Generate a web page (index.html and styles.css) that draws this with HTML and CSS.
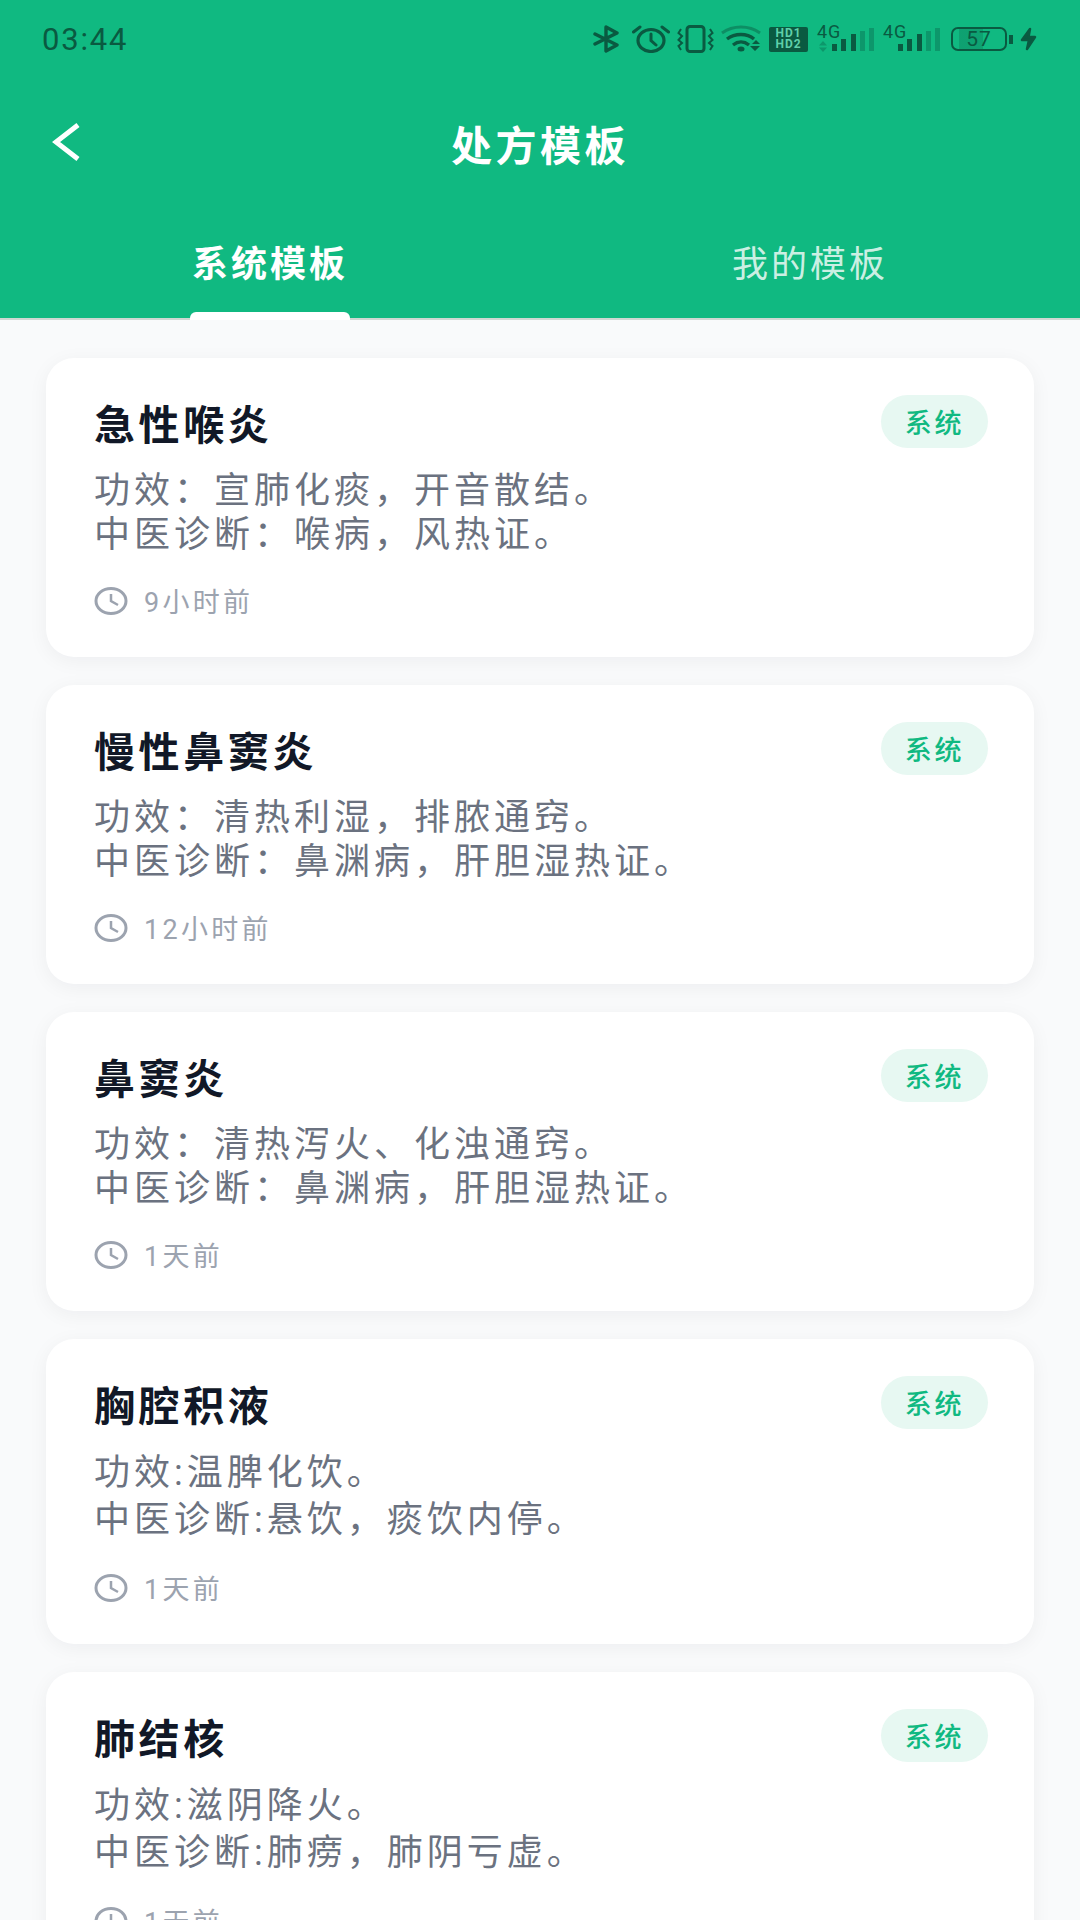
FILE: index.html
```html
<!DOCTYPE html>
<html lang="zh-CN">
<head>
    <meta charset="utf-8">
    <meta name="viewport" content="width=device-width, initial-scale=1">
    <title>处方模板</title>
    <link rel="stylesheet" href="styles.css">
</head>
<body>
    <header class="header">
        <div class="status-bar">
            <span class="status-time">03:44</span>
            <div class="status-icons">
                <svg class="icon-bt" viewBox="0 0 27 28"><path d="M2 9 L24 20 L13 26 V2 L24 8 L2 19" fill="none" stroke="#0a5a41" stroke-width="3.4" stroke-linecap="round" stroke-linejoin="round"/></svg>
                <svg class="icon-alarm" viewBox="0 0 38 28"><ellipse cx="19" cy="15.500" rx="13" ry="11" fill="none" stroke="#0a5a41" stroke-width="3.2"/><path d="M19 9 V15.500 L24 20 M1.500 7 L8 2 M36.500 7 L30 2" fill="none" stroke="#0a5a41" stroke-width="3" stroke-linecap="round"/></svg>
                <svg class="icon-vibrate" viewBox="0 0 37 28"><rect x="10" y="1.500" width="17" height="25" rx="3" fill="none" stroke="#0a5a41" stroke-width="3"/><path d="M4 4 L1.500 8 L5 11 L1.500 15 L5 18 L1.500 21 L4 25 M33 4 L35.500 8 L32 11 L35.500 15 L32 18 L35.500 21 L33 25" fill="none" stroke="#0a5a41" stroke-width="2"/></svg>
                <svg class="icon-wifi" viewBox="0 0 40 28"><path d="M1 8 C12 0 28 0 39 8" fill="none" stroke="#0a5a41" stroke-opacity=".45" stroke-width="3"/><path d="M6 14 C14 8 26 8 33 14 M12 20 C17 16 23 16 28 20" fill="none" stroke="#0a5a41" stroke-width="3.4"/><ellipse cx="20" cy="24" rx="3.500" ry="2.500" fill="#0a5a41"/><path d="M31 19 L35 15 L39 19 Z M29 21 L39 21 L34 26 Z" fill="#0a5a41"/></svg>
                <div class="sim-badge"><span>HD1</span><span>HD2</span></div>
                <div class="signal">
                    <span class="signal-label">4G</span>
                    <svg class="signal-arrows" viewBox="0 0 8 11"><path d="M0 4.500 L4 0 L8 4.500 Z M0 6.500 H8 L4 11 Z" fill="#0a5a41" fill-opacity=".35"/></svg>
                    <svg class="signal-bars" viewBox="0 0 42 23"><rect x="0" y="16" width="5" height="7" fill="#0a5a41"/><rect x="9" y="11" width="5" height="12" fill="#0a5a41"/><rect x="19" y="6" width="5" height="17" fill="#0a5a41"/><rect x="28" y="3" width="5" height="20" fill="#0a5a41" fill-opacity=".35"/><rect x="37" y="0" width="5" height="23" fill="#0a5a41" fill-opacity=".35"/></svg>
                </div>
                <div class="signal">
                    <span class="signal-label">4G</span>
                    <svg class="signal-bars" viewBox="0 0 42 23"><rect x="0" y="16" width="5" height="7" fill="#0a5a41"/><rect x="9" y="11" width="5" height="12" fill="#0a5a41"/><rect x="19" y="6" width="5" height="17" fill="#0a5a41"/><rect x="28" y="3" width="5" height="20" fill="#0a5a41" fill-opacity=".35"/><rect x="37" y="0" width="5" height="23" fill="#0a5a41" fill-opacity=".35"/></svg>
                </div>
                <div class="battery">
                    <div class="battery-body"><span>57</span></div>
                    <span class="battery-tip"></span>
                </div>
                <svg class="icon-bolt" viewBox="0 0 17 24"><path d="M10 2 L2 13 H9 L7 22 L15 10 H8.500 Z" fill="#0a5a41" stroke="#0a5a41" stroke-width="2.500" stroke-linejoin="round"/></svg>
            </div>
        </div>

        <div class="nav-bar">
            <svg class="back-icon" viewBox="0 0 30 40"><path d="M26 3 L4 20 L26 37" fill="none" stroke="#fff" stroke-width="5"/></svg>
            <h1 class="page-title">处方模板</h1>
        </div>

        <div class="tabs">
            <div class="tab tab-active">系统模板</div>
            <div class="tab">我的模板</div>
        </div>
    </header>

    <main class="list">
        <section class="card">
            <div class="card-head">
                <h2 class="card-title">急性喉炎</h2>
                <span class="tag">系统</span>
            </div>
            <p class="card-text">功效：宣肺化痰，开音散结。<br>中医诊断：喉病，风热证。</p>
            <div class="card-meta">
                <svg class="clock" viewBox="0 0 34 28"><ellipse cx="17" cy="14" rx="15" ry="12.500" fill="none" stroke="#9ca3af" stroke-width="3"/><path d="M17 7 V14 L24 18" fill="none" stroke="#9ca3af" stroke-width="2.500"/></svg>
                <span>9小时前</span>
            </div>
        </section>

        <section class="card">
            <div class="card-head">
                <h2 class="card-title">慢性鼻窦炎</h2>
                <span class="tag">系统</span>
            </div>
            <p class="card-text">功效：清热利湿，排脓通窍。<br>中医诊断：鼻渊病，肝胆湿热证。</p>
            <div class="card-meta">
                <svg class="clock" viewBox="0 0 34 28"><ellipse cx="17" cy="14" rx="15" ry="12.500" fill="none" stroke="#9ca3af" stroke-width="3"/><path d="M17 7 V14 L24 18" fill="none" stroke="#9ca3af" stroke-width="2.500"/></svg>
                <span>12小时前</span>
            </div>
        </section>

        <section class="card">
            <div class="card-head">
                <h2 class="card-title">鼻窦炎</h2>
                <span class="tag">系统</span>
            </div>
            <p class="card-text">功效：清热泻火、化浊通窍。<br>中医诊断：鼻渊病，肝胆湿热证。</p>
            <div class="card-meta">
                <svg class="clock" viewBox="0 0 34 28"><ellipse cx="17" cy="14" rx="15" ry="12.500" fill="none" stroke="#9ca3af" stroke-width="3"/><path d="M17 7 V14 L24 18" fill="none" stroke="#9ca3af" stroke-width="2.500"/></svg>
                <span>1天前</span>
            </div>
        </section>

        <section class="card card-mixed">
            <div class="card-head">
                <h2 class="card-title">胸腔积液</h2>
                <span class="tag">系统</span>
            </div>
            <p class="card-text">功效:温脾化饮。<br>中医诊断:悬饮，痰饮内停。</p>
            <div class="card-meta">
                <svg class="clock" viewBox="0 0 34 28"><ellipse cx="17" cy="14" rx="15" ry="12.500" fill="none" stroke="#9ca3af" stroke-width="3"/><path d="M17 7 V14 L24 18" fill="none" stroke="#9ca3af" stroke-width="2.500"/></svg>
                <span>1天前</span>
            </div>
        </section>

        <section class="card card-mixed">
            <div class="card-head">
                <h2 class="card-title">肺结核</h2>
                <span class="tag">系统</span>
            </div>
            <p class="card-text">功效:滋阴降火。<br>中医诊断:肺痨，肺阴亏虚。</p>
            <div class="card-meta">
                <svg class="clock" viewBox="0 0 34 28"><ellipse cx="17" cy="14" rx="15" ry="12.500" fill="none" stroke="#9ca3af" stroke-width="3"/><path d="M17 7 V14 L24 18" fill="none" stroke="#9ca3af" stroke-width="2.500"/></svg>
                <span>1天前</span>
            </div>
        </section>
    </main>
</body>
</html>
```

FILE: styles.css
```css
* {
    margin: 0;
    padding: 0;
    box-sizing: border-box;
}

html, body {
    height: 1920px;
    overflow: hidden;
}

body {
    font-family: Roboto, "Noto Sans CJK SC", sans-serif;
    background: #f9fafb;
    color: #111827;
}

/* 顶部绿色区域 */
.header {
    background: #10b981;
    height: 320px;
    border-bottom: 2px solid #cfd8d3;
    display: flex;
    flex-direction: column;
}

.status-bar {
    height: 78px;
    padding: 0 43px 0 42px;
    display: flex;
    align-items: center;
    justify-content: space-between;
}

.status-time {
    font-size: 31px;
    letter-spacing: 1.800px;
    color: #0a5a41;
}

.status-icons {
    display: flex;
    align-items: center;
    gap: 7px;
    color: #0a5a41;
}

.icon-bt { width: 27px; height: 28px; margin-right: 5px; }
.icon-alarm { width: 38px; height: 28px; }
.icon-vibrate { width: 37px; height: 28px; }
.icon-wifi { width: 40px; height: 28px; }

.sim-badge {
    width: 39px;
    height: 25px;
    margin-left: 1px;
    background: #0a5a41;
    border-radius: 2px;
    display: flex;
    flex-direction: column;
    align-items: center;
    justify-content: center;
    font-size: 12px;
    font-weight: 700;
    line-height: 11px;
    letter-spacing: 1px;
    color: #5fd0aa;
}

.signal {
    width: 57px;
    height: 28px;
    margin-left: 2px;
    position: relative;
}

.signal-label {
    position: absolute;
    left: 0;
    top: -2px;
    font-size: 18px;
    line-height: 17px;
    letter-spacing: 1px;
}

.signal-arrows {
    position: absolute;
    left: 2px;
    bottom: 1px;
    width: 8px;
    height: 11px;
}

.signal-bars {
    position: absolute;
    right: 0;
    bottom: 2px;
    width: 42px;
    height: 23px;
}

.battery {
    display: flex;
    align-items: center;
    gap: 2px;
    margin-left: 4px;
}

.battery-body {
    width: 56px;
    height: 24px;
    border: 2px solid #0a5a41;
    border-radius: 7px;
    display: flex;
    align-items: center;
    justify-content: center;
    font-size: 21px;
    letter-spacing: 1px;
    color: #0a5a41;
    background: linear-gradient(90deg, transparent 12%, rgba(10, 90, 65, .25) 12%, rgba(10, 90, 65, .25) 58%, transparent 58%);
}

.battery-tip {
    width: 4px;
    height: 9px;
    background: #0a5a41;
}

.icon-bolt { width: 17px; height: 24px; }

.nav-bar {
    height: 70px;
    margin-top: 30px;
    position: relative;
    display: flex;
    align-items: center;
    justify-content: center;
}

.back-icon {
    position: absolute;
    left: 52px;
    top: 14px;
    width: 30px;
    height: 40px;
}

.page-title {
    font-size: 41px;
    font-weight: 700;
    letter-spacing: 3.500px;
    color: #fff;
}

.tabs {
    margin-top: auto;
    height: 79px;
    display: flex;
}

.tab {
    flex: 1;
    position: relative;
    text-align: center;
    font-size: 36px;
    letter-spacing: 3px;
    line-height: 52px;
    color: rgba(255, 255, 255, .8);
}

.tab-active {
    color: #fff;
    font-weight: 700;
}

.tab-active:after {
    content: "";
    position: absolute;
    left: 50%;
    bottom: -2px;
    width: 160px;
    height: 8px;
    margin-left: -80px;
    background: #fff;
    border-radius: 6px 6px 0 0;
}

/* 模板列表 */
.list {
    padding: 38px 46px 0;
    display: flex;
    flex-direction: column;
    gap: 28px;
}

.card {
    background: #fff;
    border-radius: 28px;
    padding: 42px 46px 0 48px;
    height: 299px;
    box-shadow: 0 4px 20px rgba(17, 24, 39, .05);
    flex-shrink: 0;
}

.card-mixed {
    height: 305px;
}

.card-head {
    display: flex;
    align-items: flex-start;
    justify-content: space-between;
    height: 69px;
}

.card-title {
    font-size: 41px;
    font-weight: 700;
    line-height: 52px;
    letter-spacing: 3.600px;
    color: #111827;
}

.tag {
    width: 107px;
    height: 53px;
    margin-top: -5px;
    border-radius: 27px;
    background: #e7f8f2;
    color: #10b981;
    font-size: 27px;
    letter-spacing: 2.700px;
    font-weight: 500;
    display: flex;
    align-items: center;
    justify-content: center;
}

.card-text {
    font-size: 36px;
    line-height: 44px;
    letter-spacing: 4px;
    color: #6b7280;
}

.card-mixed .card-text {
    line-height: 47px;
}

.card-meta {
    margin-top: 24px;
    display: flex;
    align-items: center;
    gap: 16px;
    font-size: 27px;
    letter-spacing: 3.300px;
    color: #9ca3af;
}

.clock {
    width: 34px;
    height: 28px;
}
```
